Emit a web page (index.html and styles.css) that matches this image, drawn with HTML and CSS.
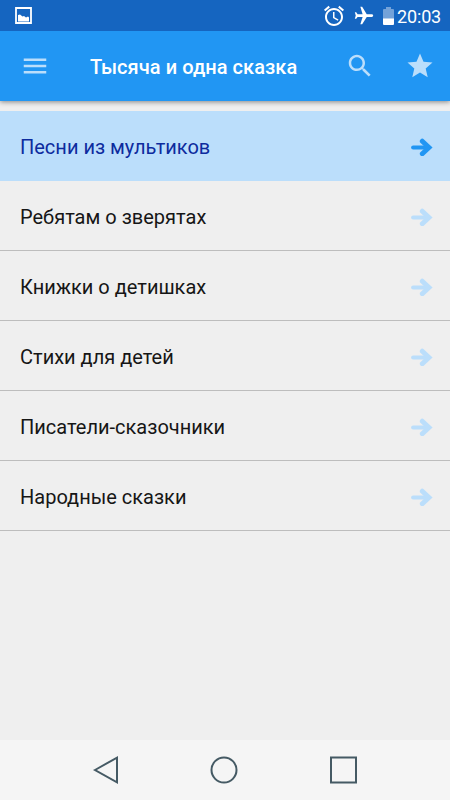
FILE: index.html
```html
<!DOCTYPE html>
<html lang="ru">
<head>
<meta charset="utf-8">
<title>Тысяча и одна сказка</title>
<link rel="stylesheet" href="styles.css">
</head>
<body>
<svg class="defs" width="0" height="0" aria-hidden="true">
  <symbol id="arrow" viewBox="0 0 22 18">
    <path d="M2.200 9.500H14" fill="none" stroke="currentColor" stroke-width="4.200" stroke-linecap="round"/>
    <path d="M11.300 3.200L18 9.500L11.300 15.800" fill="none" stroke="currentColor" stroke-width="4.900" stroke-linecap="round" stroke-linejoin="miter"/>
  </symbol>
</svg>
<div class="screen">
  <div class="status">
    <svg class="picture" width="18" height="18" viewBox="0 0 18 18"><path d="M1 1H16V16H1Z" fill="none" stroke="#fff" stroke-width="1.800"/><path d="M3 14.500V8L5 7.500L7.500 9.500L9 9L11 10.500L13 9.500L14 10.500V14.500Z" fill="#fff"/></svg>
    <div class="indicators">
      <svg class="alarm" width="24" height="24" viewBox="0 0 24 24"><path fill="#fff" d="M22 5.720l-4.600-3.860-1.290 1.530 4.600 3.860L22 5.720zM7.880 3.390L6.600 1.860 2 5.710l1.290 1.530 4.590-3.850zM12.500 8H11v6l4.750 2.850.750-1.230-4-2.370V8zM12 4c-4.970 0-9 4.030-9 9s4.020 9 9 9c4.970 0 9-4.030 9-9s-4.030-9-9-9zm0 16c-3.870 0-7-3.130-7-7s3.130-7 7-7 7 3.130 7 7-3.130 7-7 7z"/></svg>
      <svg class="plane" width="22" height="22" viewBox="0 0 24 24"><path fill="#fff" transform="rotate(90 12 12)" d="M21 16v-2l-8-5V3.500c0-.830-.670-1.500-1.500-1.500S10 2.670 10 3.500V9l-8 5v2l8-2.500V19l-2 1.500V22l3.500-1 3.500 1v-1.500L13 19v-5.500l8 2.500z"/></svg>
      <svg class="battery" width="11" height="18" viewBox="0 0 11 18"><path d="M1 2H3V0H8V2H10Q11 2 11 3V12H0V3Q0 2 1 2Z" fill="#73a2d9"/><path d="M0 11.500H11V17Q11 18 10 18H1Q0 18 0 17Z" fill="#fff"/></svg>
      <span class="clock">20:03</span>
    </div>
  </div>
  <header class="bar">
    <svg width="30" height="30" viewBox="0 0 24 24"><path fill="currentColor" d="M3 18h18v-2H3v2zm0-5h18v-2H3v2zm0-7v2h18V6H3z"/></svg>
    <h1 class="title">Тысяча и одна сказка</h1>
    <svg class="search" width="30" height="30" viewBox="0 0 24 24"><path fill="currentColor" d="M15.500 14h-.790l-.280-.270C15.410 12.590 16 11.110 16 9.500 16 5.910 13.090 3 9.500 3S3 5.910 3 9.500 5.910 16 9.500 16c1.610 0 3.090-.590 4.230-1.570l.270.280v.790l5 4.990L20.490 19l-4.990-5zm-6 0C7.010 14 5 11.990 5 9.500S7.010 5 9.500 5 14 7.010 14 9.500 11.990 14 9.500 14z"/></svg>
    <svg class="star" width="30" height="30" viewBox="0 0 24 24"><path fill="currentColor" d="M12 17.270L18.180 21l-1.640-7.030L22 9.240l-7.190-.610L12 2 9.190 8.630 2 9.240l5.460 4.730L5.820 21z"/></svg>
  </header>
  <main class="list">
    <div class="row active"><span>Песни из мультиков</span><svg class="arrow"><use href="#arrow"/></svg></div>
    <div class="row"><span>Ребятам о зверятах</span><svg class="arrow"><use href="#arrow"/></svg></div>
    <div class="row"><span>Книжки о детишках</span><svg class="arrow"><use href="#arrow"/></svg></div>
    <div class="row"><span>Стихи для детей</span><svg class="arrow"><use href="#arrow"/></svg></div>
    <div class="row"><span>Писатели-сказочники</span><svg class="arrow"><use href="#arrow"/></svg></div>
    <div class="row"><span>Народные сказки</span><svg class="arrow"><use href="#arrow"/></svg></div>
  </main>
  <nav class="nav">
    <svg width="28" height="30" viewBox="0 0 28 30"><path d="M4 15L26 2.600V27.400Z"/></svg>
    <svg width="28" height="30" viewBox="0 0 28 30"><circle cx="14" cy="15" r="12.500"/></svg>
    <svg width="28" height="30" viewBox="0 0 28 30"><path d="M2 2.500H27V27.500H2Z"/></svg>
  </nav>
</div>
</body>
</html>
```
FILE: styles.css
```css
* { box-sizing: border-box; }
body { margin: 0; font-family: Roboto, "Noto Sans", sans-serif; }
svg { display: block; flex: none; }
.defs { position: absolute; }
.screen {
  width: 450px;
  height: 800px;
  display: flex;
  flex-direction: column;
  background: #efefef;
  overflow: hidden;
}
.status {
  position: relative;
  z-index: 1;
  height: 31px;
  padding: 0 9px 0 15px;
  display: flex;
  align-items: center;
  justify-content: space-between;
  background: #1565c0;
  color: #fff;
}
.indicators { display: flex; align-items: center; }
.plane { margin-left: 7px; }
.battery { margin: 0 3px 0 8px; }
.clock { font-size: 18px; line-height: 31px; width: 44px; white-space: nowrap; padding-top: 1px; letter-spacing: -.15px; }
.bar {
  height: 70px;
  flex: none;
  padding: 0 15px 0 20px;
  display: flex;
  align-items: center;
  background: #2196f3;
  color: #bbdefb;
  box-shadow: 0 1px 5px rgba(0, 0, 0, .45);
}
.title {
  margin: 0 0 0 40px;
  flex: 1;
  font-size: 20px;
  line-height: 30px;
  font-weight: 500;
  letter-spacing: .06px;
  color: #fff;
  padding-top: 2px;
  white-space: nowrap;
}
.star { margin-left: 30px; }
.list { flex: 1; padding-top: 10px; }
.row {
  height: 70px;
  padding: 2px 17px 0 20px;
  display: flex;
  align-items: center;
  justify-content: space-between;
  border-bottom: 1px solid #bdbdbd;
  font-size: 20px;
  color: #161616;
}
.active { background: #bbdefb; border-bottom-color: #bbdefb; color: #0d2b9e; }
.arrow { width: 22px; height: 18px; color: #bbdefb; overflow: visible; }
.active .arrow { color: #2196f3; }
.nav {
  height: 60px;
  padding: 0 93px 0 91px;
  display: flex;
  align-items: center;
  justify-content: space-between;
  background: #f5f5f5;
}
.nav svg { fill: none; stroke: #455a64; stroke-width: 2; }
```
